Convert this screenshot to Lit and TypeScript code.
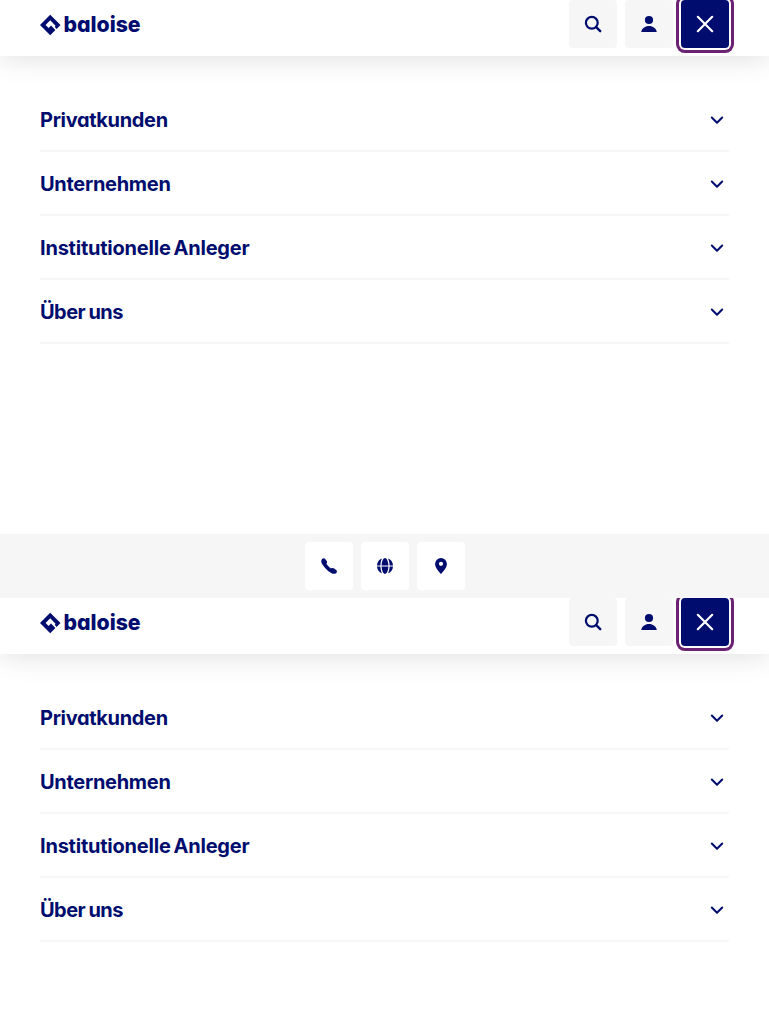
import { LitElement, html, css, svg } from "lit";
import { customElement } from "lit/decorators.js";
import { styleMap } from "lit/directives/style-map.js";

const entries = [
  { label: "Privatkunden", tracking: -0.33, gap: 0 },
  { label: "Unternehmen", tracking: -0.3, gap: 0 },
  { label: "Institutionelle Anleger", tracking: -0.22, gap: -1.6 },
  { label: "Über uns", tracking: -0.55, gap: -0.9 },
];

const icons = {
  search: svg`<circle cx="6.800" cy="6.800" r="5.900" fill="none" stroke="currentColor" stroke-width="2.200"/><path d="M11.2 11.2L15.200 15.200" fill="none" stroke="currentColor" stroke-width="2.400" stroke-linecap="round"/>`,
  person: svg`<circle cx="8" cy="4" r="4.100"/><path d="M.2 16C.8 12.300 4 9.900 8 9.900s7.200 2.400 7.800 6.100z"/>`,
  close: svg`<path d="M.8.8L15.200 15.200M15.200.8L.8 15.200" fill="none" stroke="currentColor" stroke-width="2.200" stroke-linecap="round"/>`,
  phone: svg`<path d="M.9 1.300C1.700.2 3-.2 3.900.8L5.700 3C6.400 4 6.200 4.800 5.400 5.800C6.500 7.500 8.300 9.300 10 10.400C11.200 9.800 12.200 9.800 13.100 10.500L15.200 12C16.200 12.900 16.200 14 15.300 14.900C14 16.100 12.200 16.100 10.200 14.900C6.300 12.600 3.300 9.500 1.100 5.900C0 4 0 2.400.9 1.300z"/>`,
  globe: svg`<path d="M5 .6A8 8 0 0 0 0 7.400h3.400C3.500 4.800 4 2.400 5 .6zM11 .6c1 1.800 1.500 4.200 1.600 6.800H16A8 8 0 0 0 11 .6zM8 0C6.300 0 4.800 3.300 4.600 7.400h6.800C11.200 3.300 9.700 0 8 0zM0 8.600a8 8 0 0 0 5 6.800c-1-1.800-1.500-4.200-1.600-6.800zM11 15.400a8 8 0 0 0 5-6.800h-3.400c-.1 2.600-.6 5-1.600 6.800zM4.600 8.600C4.800 12.700 6.300 16 8 16s3.200-3.300 3.400-7.400z"/>`,
  pin: svg`<path fill-rule="evenodd" d="M8 0a5.900 5.900 0 0 0-5.900 5.900C2.100 9.600 5.400 12.800 8 16c2.600-3.200 5.900-6.400 5.900-10.100A5.900 5.900 0 0 0 8 0zM8 3.700a2.100 2.100 0 1 1 0 4.200a2.100 2.100 0 0 1 0-4.200z"/>`,
};

const glyph = (name: keyof typeof icons) =>
  html`<svg class="icon" viewBox="0 0 16 16" fill="currentColor">${icons[name]}</svg>`;

@customElement("nav-panel")
class NavPanel extends LitElement {
  static styles = css`
    :host { display: block; overflow: hidden; background: #fff; color: #000d6e; }
    * { box-sizing: border-box; }
    header {
      position: relative; display: flex; justify-content: space-between;
      height: 56px; padding: 0 40px; background: #fff;
      box-shadow: 0 0 30px rgba(0, 0, 0, 0.15);
    }
    .logo { display: block; width: 102px; height: 48px; overflow: visible; }
    .wordmark { font: 800 22px Inter, "Liberation Sans", sans-serif; font-feature-settings: "cv11"; }
    .actions { display: flex; gap: 8px; }
    button {
      display: flex; align-items: center; justify-content: center;
      width: 48px; height: 48px; padding: 0; border: 0; border-radius: 4px;
      background: #f6f6f6; color: inherit;
    }
    .icon { width: 16px; height: 16px; overflow: visible; }
    .active { background: #000d6e; color: #fff; box-shadow: 0 0 0 2px #fff, 0 0 0 5px #6c2273; }
    ul { list-style: none; margin: 0; padding: 32px 40px 0; }
    li {
      display: flex; align-items: center; justify-content: space-between;
      height: 64px; padding: 2px 6px 0 0; border-bottom: 2px solid #f6f6f6;
      font: 700 20px/32px Inter, "Liberation Sans", sans-serif;
      font-feature-settings: "cv11", "ss03";
      white-space: nowrap;
    }
    .chevron { width: 12px; height: 8px; overflow: visible; }
    .space { height: 190px; }
    footer { display: flex; justify-content: center; gap: 8px; height: 64px; padding: 8px 0; background: #f6f6f6; }
    footer button { background: #fff; }
  `;

  render() {
    return html`
      <header>
        <svg class="logo" viewBox="0 0 102 48" fill="currentColor">
          <path d="M10.200 14.700L20.500 25L16.600 28.900L14.800 27.100L15.500 25.700L10.200 20.300L5.600 25L8.600 28L11 25.600L15.400 30L10.200 35.200L0 25z"/>
          <text class="wordmark" x="23.400" y="32.300" textLength="77.200" lengthAdjust="spacingAndGlyphs">baloise</text>
        </svg>
        <div class="actions">
          <button aria-label="Suche">${glyph("search")}</button>
          <button aria-label="Login">${glyph("person")}</button>
          <button class="active" aria-label="Menü schliessen">${glyph("close")}</button>
        </div>
      </header>
      <ul>
        ${entries.map(
          (e) => html`<li>
            <span style=${styleMap({ letterSpacing: `${e.tracking}px`, wordSpacing: `${e.gap}px` })}>${e.label}</span>
            <svg class="chevron" viewBox="0 0 12 8" fill="none" stroke="currentColor" stroke-width="2" stroke-linecap="round" stroke-linejoin="round"><path d="M.8 1.500L6 6.700L11.200 1.500"/></svg>
          </li>`
        )}
      </ul>
      <div class="space"></div>
      <footer>
        <button aria-label="Telefon">${glyph("phone")}</button>
        <button aria-label="Sprache">${glyph("globe")}</button>
        <button aria-label="Standort">${glyph("pin")}</button>
      </footer>
    `;
  }
}

@customElement("app-root")
class AppRoot extends LitElement {
  static styles = css`
    :host { display: block; height: 1024px; overflow: hidden; background: #fff; }
  `;
  render() {
    return html`<nav-panel></nav-panel><nav-panel></nav-panel>`;
  }
}
